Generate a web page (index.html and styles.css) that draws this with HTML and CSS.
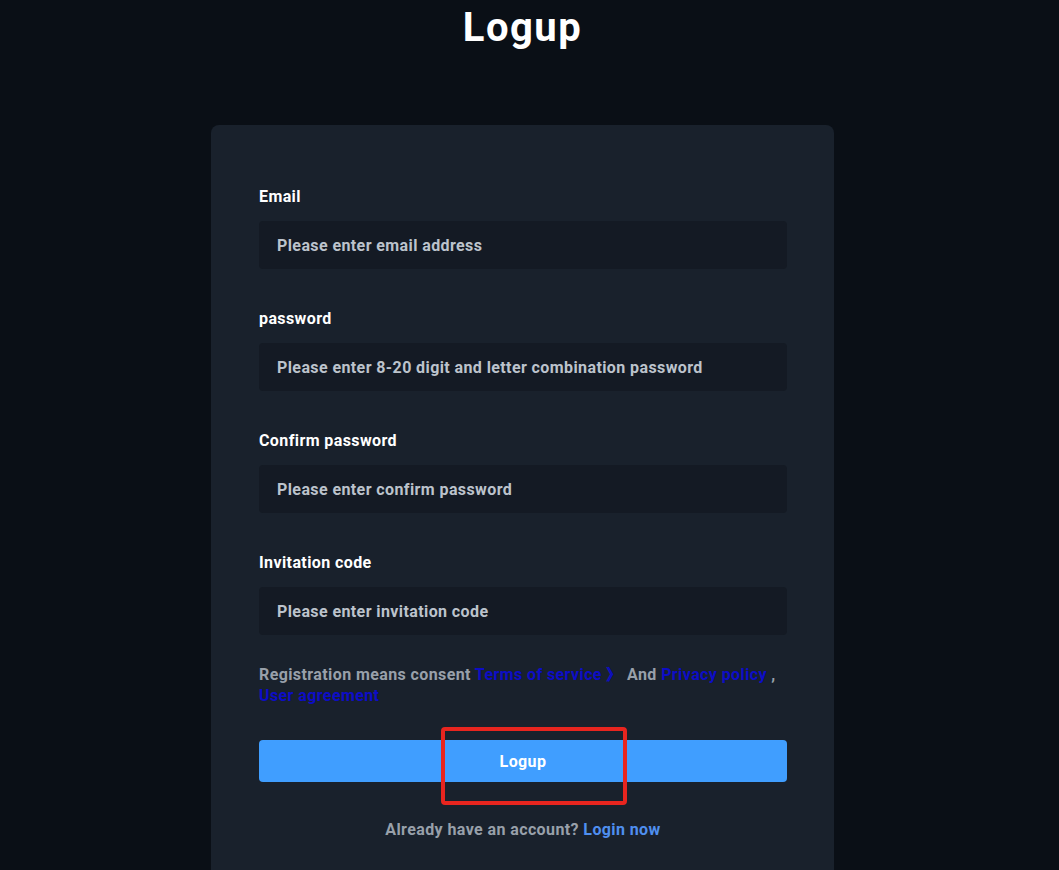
FILE: index.html
```html
<!DOCTYPE html>
<html>
<head>
<meta charset="utf-8">
<link rel="stylesheet" href="styles.css">
</head>
<body>
<h1 class="title">Logup</h1>
<div class="card">
  <div class="field">
    <div class="label">Email</div>
    <div class="input">Please enter email address</div>
  </div>
  <div class="field">
    <div class="label">password</div>
    <div class="input">Please enter 8-20 digit and letter combination password</div>
  </div>
  <div class="field">
    <div class="label">Confirm password</div>
    <div class="input">Please enter confirm password</div>
  </div>
  <div class="field field-last">
    <div class="label">Invitation code</div>
    <div class="input">Please enter invitation code</div>
  </div>
  <p class="terms">Registration means consent <a class="tlink">Terms of service 》</a> And <a class="tlink">Privacy policy</a> , <a class="tlink">User agreement</a></p>
  <div class="btn-wrap">
    <button class="btn">Logup</button>
    <div class="mark"></div>
  </div>
  <p class="already">Already have an account? <a class="login">Login now</a></p>
</div>
</body>
</html>
```
FILE: styles.css
```css
html, body {
  margin: 0;
  padding: 0;
  background: #0a0f16;
  height: 100%;
  overflow: hidden;
}
body {
  font-family: Roboto, "Liberation Sans", sans-serif;
  font-weight: 700;
  color: #ffffff;
  letter-spacing: 0.4px;
  padding-right: 14px;
  box-sizing: border-box;
}
.title {
  margin: 0;
  text-align: center;
  font-size: 40px;
  line-height: 56px;
  font-weight: 700;
  letter-spacing: 1.5px;
  color: #ffffff;
}
.card {
  width: 528px;
  margin: 69px auto 0;
  background: #19212c;
  border-radius: 8px;
  padding: 61px 47px 60px 48px;
}
.field {
  margin-bottom: 39px;
}
.field-last {
  margin-bottom: 0;
}
.label {
  font-size: 16px;
  line-height: 22px;
  color: #ffffff;
  margin-bottom: 13px;
}
.input {
  height: 48px;
  box-sizing: border-box;
  background: #141a24;
  border-radius: 4px;
  padding: 0 18px;
  display: flex;
  align-items: center;
  font-size: 16px;
  color: #bcc3cc;
}
.terms {
  margin: 29px 0 0;
  font-size: 16px;
  line-height: 21px;
  color: #98a0aa;
}
.tlink {
  color: #0d0dc6;
}
.btn-wrap {
  position: relative;
  margin-top: 34px;
}
.btn {
  display: block;
  width: 100%;
  height: 42px;
  border: none;
  border-radius: 4px;
  background: #409eff;
  color: #ffffff;
  font-family: inherit;
  font-weight: 700;
  font-size: 16px;
  letter-spacing: 0.4px;
}
.mark {
  position: absolute;
  left: 182px;
  top: -13px;
  width: 186px;
  height: 78px;
  box-sizing: border-box;
  border: 4px solid #e8251f;
  border-radius: 4px;
}
.already {
  margin: 37px 0 0;
  text-align: center;
  font-size: 16px;
  line-height: 22px;
  color: #98a0aa;
}
.login {
  color: #4f8ff0;
}
```
